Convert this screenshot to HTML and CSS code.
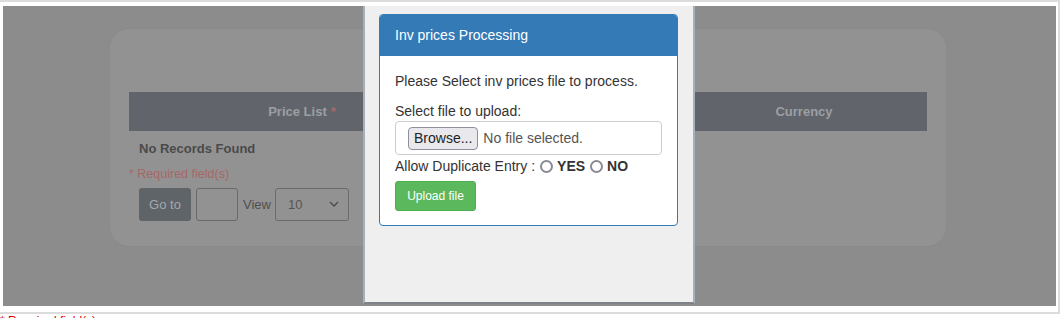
FILE: index.html
```html
<!DOCTYPE html>
<html lang="en">
<head>
  <meta charset="UTF-8" />
  <title>Inv prices Processing</title>
  <link rel="stylesheet" href="styles.css">
</head>
<body>
  <div class="frame">
    <div class="overlay">
      <!-- page behind the modal -->
      <div class="card">
        <div class="grid-head">
          <div class="col">Price List <span class="req">*</span></div>
          <div class="col"></div>
          <div class="col">Currency</div>
        </div>
        <div class="no-records">No Records Found</div>
        <div class="required">* Required field(s)</div>
        <div class="pager">
          <span class="btn-goto">Go to</span>
          <span class="page-input"></span>
          <span class="view-label">View</span>
          <span class="page-select">10
            <svg class="chev" width="10" height="6" viewBox="0 0 10 6"><path d="M1 1l4 4 4-4" fill="none" stroke="#4a4a4a" stroke-width="1.3"/></svg>
          </span>
        </div>
      </div>

      <!-- Modal -->
      <div class="modal">
        <div class="panel">
          <div class="panel-heading">Inv prices Processing</div>
          <div class="panel-body">
            <p class="intro">Please Select inv prices file to process.</p>
            <div class="label">Select file to upload:</div>
            <div class="file-box">
              <span class="browse">Browse...</span>
              <span class="file-name">No file selected.</span>
            </div>
            <div class="dup-row">
              Allow Duplicate Entry :
              <span class="radio"></span><b>YES</b>
              <span class="radio"></span><b>NO</b>
            </div>
            <span class="btn-upload">Upload file</span>
          </div>
        </div>
      </div>
    </div>
  </div>
  <div class="foot-req">* Required field(s)</div>
</body>
</html>
```

FILE: styles.css
```css
* { box-sizing: border-box; }
body {
  margin: 0;
  font-family: "Liberation Sans", Arial, sans-serif;
  background: #fff;
  color: #333;
}
.frame {
  width: 1060px;
  border-top: 2px solid #dcdcdc;
  border-right: 2px solid #dcdcdc;
  border-bottom: 2px solid #dcdcdc;
  padding: 4px 2px 6px 3px;
}
.overlay {
  position: relative;
  height: 300px;
  background: #8c8c8c;
  padding-top: 22px;
  padding-left: 106px;
}
/* dimmed page */
.card {
  width: 838px; height: 219px;
  background: #929292;
  border: 1px solid #8a8a8a;
  border-radius: 20px;
  padding: 63px 19px 0;
}
.grid-head {
  display: grid;
  grid-template-columns: 346px 206px 246px;
  height: 39px;
  background: #61656b;
  color: #9b9fa4;
  font-weight: bold;
  font-size: 13px;
}
.grid-head .col {
  display: flex; align-items: center; justify-content: center;
}
.grid-head .req { color: #a66a6a; margin-left: 4px; }
.no-records {
  padding: 9px 10px 0;
  line-height: 18px;
  font-size: 13px;
  font-weight: bold;
  color: #4a4a4a;
}
.required {
  margin-top: 8px;
  line-height: 16px;
  font-size: 12.5px;
  color: #a86666;
}
.pager {
  display: flex; align-items: center;
  gap: 5px;
  margin-top: 6px;
  padding-left: 10px;
  height: 33px;
}
.btn-goto {
  display: flex; align-items: center; justify-content: center;
  width: 52px; height: 33px;
  background: #5f6469;
  color: #a3a8ad;
  font-size: 13px;
  border-radius: 3px;
}
.page-input {
  width: 42px; height: 33px;
  border: 1px solid #686b6e;
  border-radius: 3px;
}
.view-label { color: #505050; font-size: 13px; }
.page-select {
  display: flex; align-items: center; justify-content: space-between;
  width: 74px; height: 33px;
  margin-top: -1px;
  margin-left: -1px;
  padding: 0 9px 0 12px;
  border: 1px solid #6b6b6b;
  border-radius: 3px;
  color: #555;
  font-size: 13px;
}
/* modal */
.modal {
  position: absolute;
  left: 360px; top: 0;
  width: 332px; height: 298px;
  background: #efefef;
  border: 2px solid #a7afba;
  border-bottom-color: #7f8388;
  border-top: none;
  padding: 8px 0 0 14px;
}
.panel {
  width: 299px;
  background: #fff;
  border: 1px solid #337ab7;
  border-radius: 4px;
  overflow: hidden;
}
.panel-heading {
  height: 41px;
  line-height: 41px;
  padding: 0 15px;
  background: #337ab7;
  color: #fff;
  font-size: 14px;
}
.panel-body {
  padding: 15px 15px 14px;
  font-size: 14px;
  line-height: 20px;
}
.intro { margin: 0 0 10px; }
.file-box {
  display: flex; align-items: center;
  height: 34px;
  border: 1px solid #ccc;
  border-radius: 4px;
  padding-left: 12px;
  color: #555;
}
.browse {
  height: 23px;
  line-height: 21px;
  padding: 0 5px;
  background: #e9e9ed;
  border: 1px solid #8f8f9d;
  border-radius: 4px;
  color: #222;
  margin-right: 5px;
}
.dup-row {
  display: flex; align-items: center;
  height: 22px;
}
.radio {
  width: 13px; height: 13px;
  border: 2px solid #8a8a94;
  border-radius: 50%;
  margin: 0 4px 0 5px;
}
.dup-row b { color: #333; }
.btn-upload {
  display: inline-block;
  margin-top: 4px;
  width: 81px; height: 30px;
  line-height: 28px;
  text-align: center;
  font-size: 12px;
  color: #fff;
  background: #5cb85c;
  border: 1px solid #4cae4c;
  border-radius: 3px;
}
.foot-req {
  color: #d00;
  font-size: 12px;
  line-height: 14px;
}
```
